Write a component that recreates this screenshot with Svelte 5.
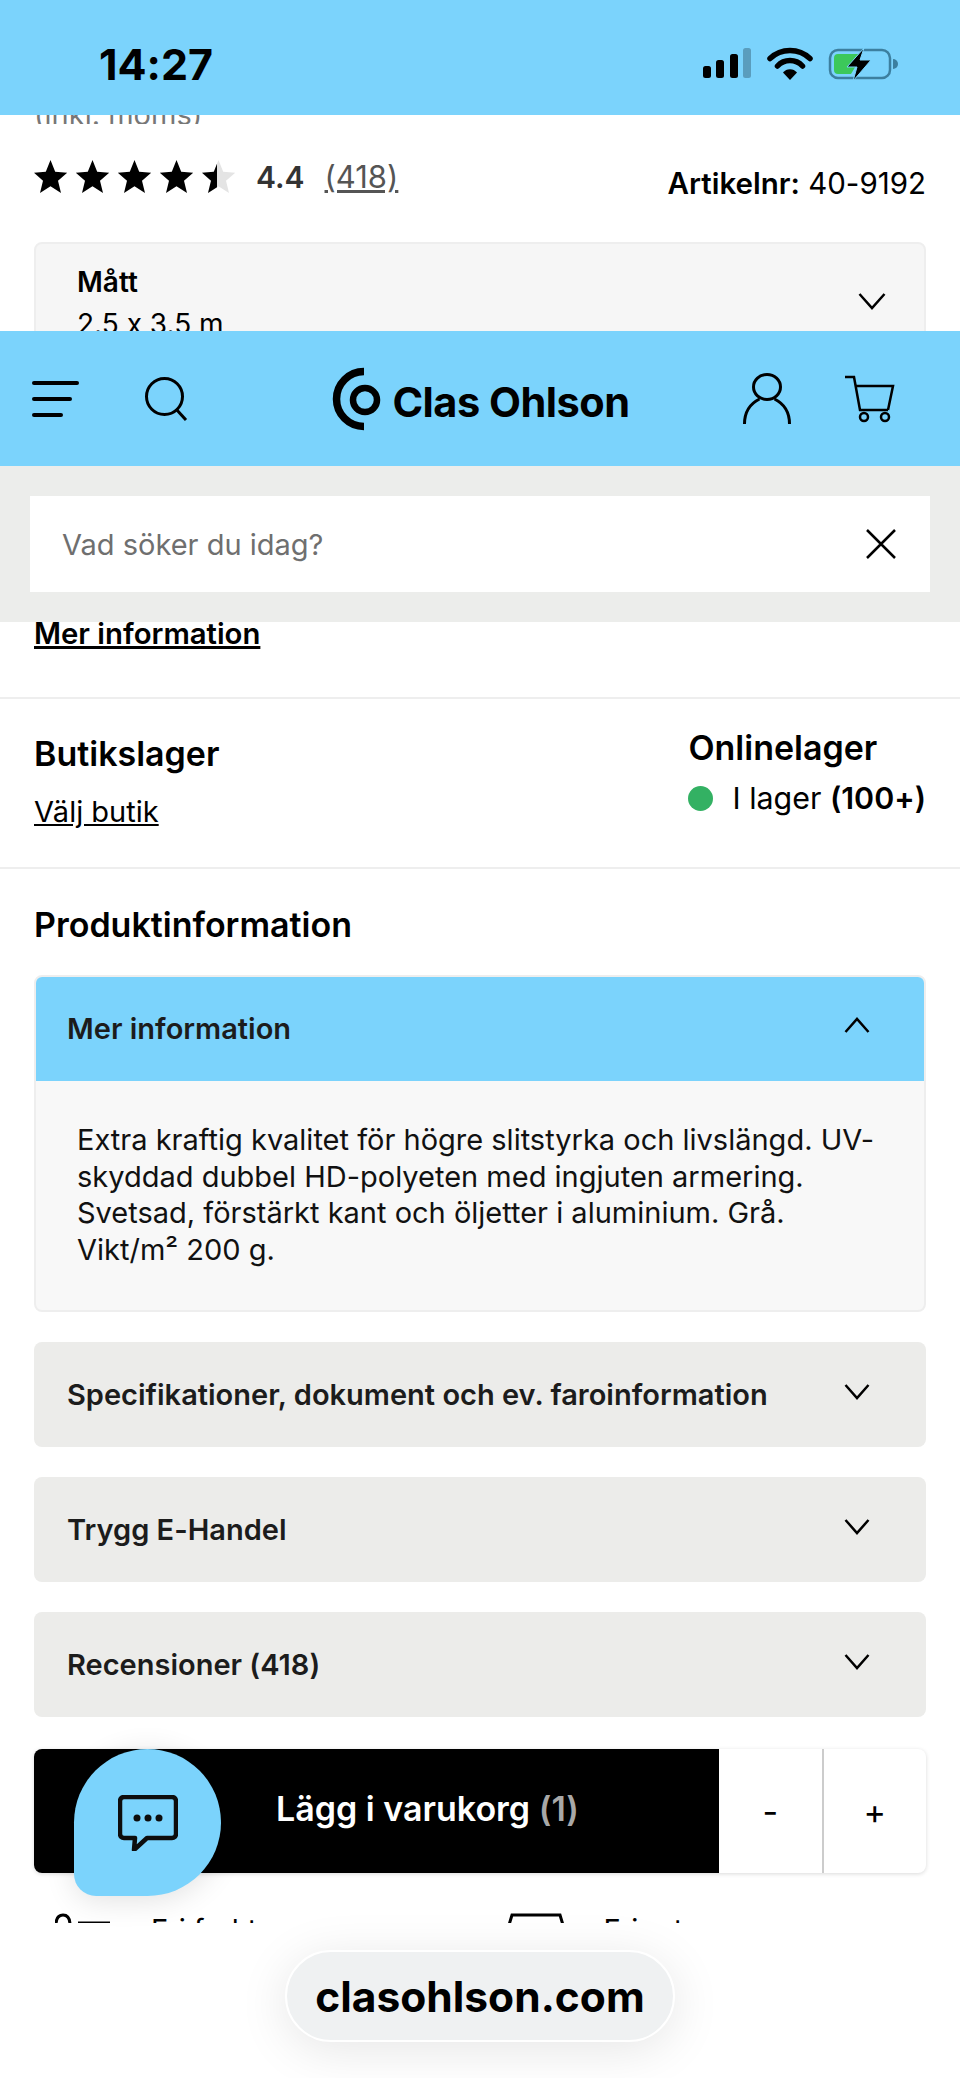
<script>
  const closed = ['Specifikationer, dokument och ev. faroinformation', 'Trygg E-Handel', 'Recensioner (418)']
</script>

<div class="page">
  <div class="status">
    <span class="time">14:27</span>
    <svg class="status-icons" width="200" height="40" viewBox="0 0 200 40">
      <rect x="2" y="19" width="8" height="12" rx="2.5" fill="#000" />
      <rect x="15" y="13" width="8" height="18" rx="2.5" fill="#000" />
      <rect x="29" y="7" width="8" height="24" rx="2.5" fill="#000" />
      <rect x="42" y="1" width="8" height="30" rx="2.5" fill="#5a9dbd" />
      <path d="M69 11.500a29 29 0 0 1 40 0" fill="none" stroke="#000" stroke-width="5.500" stroke-linecap="round" />
      <path d="M76.500 19a17 17 0 0 1 25 0" fill="none" stroke="#000" stroke-width="5.500" stroke-linecap="round" />
      <path d="M82 25.500a9 9 0 0 1 14 0L89 33z" fill="#000" />
      <rect x="129" y="3" width="60" height="28" rx="8" fill="none" stroke="#3c7f9f" stroke-width="2.500" />
      <path d="M133 11a4 4 0 0 1 4-4h21l-7 10h5l-6 10h-13a4 4 0 0 1-4-4z" fill="#3cc85a" />
      <path d="M163 1L146 20h10l-4 14 18-21h-11z" fill="#000" stroke="#7bd3fc" stroke-width="1" />
      <path d="M192 12a5 5 0 0 1 0 10z" fill="#3c7f9f" />
    </svg>
  </div>

  <section class="top">
    <div class="clipped-line">(inkl. moms)</div>
    <div class="rating-row">
      <div class="rating">
        <svg class="stars" width="202" height="34" viewBox="0 0 202 34">
          <defs>
            <path id="star" d="M16.500 0l4.700 11.800 12 .9-9.200 8 3 12.300-10.500-6.700-10.500 6.700 3-12.300-9.200-8 12-.9z" />
            <clipPath id="half"><rect x="0" y="0" width="15" height="34" /></clipPath>
          </defs>
          <use href="#star" x="0" />
          <use href="#star" x="42" />
          <use href="#star" x="84" />
          <use href="#star" x="126" />
          <use href="#star" x="168" fill="#e4e4e4" />
          <use href="#star" x="168" clip-path="url(#half)" />
        </svg>
        <b class="score">4.4</b>
        <span class="count">(418)</span>
      </div>
      <div class="artnr"><b>Artikelnr:</b> 40-9192</div>
    </div>
    <div class="variant">
      <div>
        <div class="variant-label">Mått</div>
        <div class="variant-value">2.5 x 3.5 m</div>
      </div>
      <svg width="28" height="18" viewBox="0 0 28 18"><path d="M1.500 2L14 16 26.500 2" fill="none" stroke="#000" stroke-width="2.500" /></svg>
    </div>
  </section>

  <header class="header">
    <div class="header-left">
      <div class="burger"><i></i><i></i><i></i></div>
      <svg width="44" height="44" viewBox="0 0 44 44" fill="none" stroke="#000" stroke-width="3">
        <circle cx="19.500" cy="19.500" r="18" />
        <path d="M31 32l10 11" />
      </svg>
    </div>
    <div class="logo">
      <svg width="50" height="64" viewBox="0 0 50 64" fill="none" stroke="#000">
        <path d="M32 4.500a27.500 27.500 0 0 0 0 55" stroke-width="7.500" />
        <circle cx="33" cy="33" r="12" stroke-width="6.500" />
      </svg>
      <span>Clas Ohlson</span>
    </div>
    <div class="header-right">
      <svg width="48" height="52" viewBox="0 0 48 52" fill="none" stroke="#000" stroke-width="3">
        <ellipse cx="24" cy="14" rx="13.500" ry="12.500" />
        <path d="M1.500 51c0-13 7-21 15-25M46.500 51c0-13-7-21-15-25" />
      </svg>
      <svg width="52" height="48" viewBox="0 0 52 48" fill="none" stroke="#000" stroke-width="2.500">
        <path d="M1 2h9l6 33h28" />
        <path d="M11 11h38l-5 24" />
        <circle cx="20" cy="42" r="4" />
        <circle cx="41" cy="42" r="4" />
      </svg>
    </div>
  </header>

  <div class="search-band">
    <div class="search-input">
      <span>Vad söker du idag?</span>
      <svg width="30" height="30" viewBox="0 0 30 30" fill="none" stroke="#000" stroke-width="2.500"><path d="M1 1l28 28M29 1L1 29" /></svg>
    </div>
  </div>

  <a class="more-link">Mer information</a>

  <section class="stock">
    <div class="stock-store">
      <h3>Butikslager</h3>
      <a>Välj butik</a>
    </div>
    <div class="stock-online">
      <h3>Onlinelager</h3>
      <div class="in-stock"><i class="dot"></i><span>I lager <b>(100+)</b></span></div>
    </div>
  </section>

  <section class="product">
    <h2>Produktinformation</h2>
    <div class="acc open">
      <div class="acc-head">
        <span>Mer information</span>
        <svg width="26" height="16" viewBox="0 0 26 16"><path d="M1.500 15L13 2l11.500 13" fill="none" stroke="#000" stroke-width="2.500" /></svg>
      </div>
      <p>Extra kraftig kvalitet för högre slitstyrka och livslängd. UV-<br />skyddad dubbel HD-polyeten med ingjuten armering.<br />Svetsad, förstärkt kant och öljetter i aluminium. Grå.<br />Vikt/m² 200 g.</p>
    </div>
    {#each closed as title}
      <div class="acc">
        <div class="acc-head">
          <span>{title}</span>
          <svg width="26" height="16" viewBox="0 0 26 16"><path d="M1.500 1L13 14 24.500 1" fill="none" stroke="#000" stroke-width="2.500" /></svg>
        </div>
      </div>
    {/each}
  </section>

  <div class="buy">
    <div class="buy-btn">Lägg i varukorg <span>(1)</span></div>
    <div class="qty">-</div>
    <div class="qty">+</div>
  </div>

  <div class="perks">
    <div class="perk">
      <svg width="56" height="12" viewBox="0 0 56 12" fill="none" stroke="#000" stroke-width="3">
        <path d="M1 12c0-8 3-10 7-10s7 2 7 10" />
        <path d="M23 10h32" />
      </svg>
      <span>Fri frakt</span>
    </div>
    <div class="perk">
      <svg width="56" height="12" viewBox="0 0 56 12" fill="none" stroke="#000" stroke-width="3">
        <path d="M1 12L4 2h48l3 10" />
      </svg>
      <span>Fri retur</span>
    </div>
  </div>

  <div class="url-area">
    <div class="url-pill">clasohlson.com</div>
  </div>

  <button class="chat" aria-label="Chatt">
    <svg width="60" height="56" viewBox="0 0 60 56">
      <path d="M6 2h48a4 4 0 0 1 4 4v33a4 4 0 0 1-4 4H29L16 55l1-12H6a4 4 0 0 1-4-4V6a4 4 0 0 1 4-4z" fill="none" stroke="#0d0d0d" stroke-width="4.500" stroke-linejoin="round" />
      <circle cx="19" cy="23" r="3.500" fill="#0d0d0d" />
      <circle cx="30" cy="23" r="3.500" fill="#0d0d0d" />
      <circle cx="41" cy="23" r="3.500" fill="#0d0d0d" />
    </svg>
  </button>
</div>

<style>
  :global(body) {
    margin: 0;
    background: #fff;
  }

  .page {
    position: relative;
    width: 960px;
    height: 2078px;
    overflow: hidden;
    background: #fff;
    color: #000;
    font-family: Inter, "Liberation Sans", sans-serif;
    font-feature-settings: "calt" 0;
  }

  .status {
    height: 115px;
    background: #7bd3fc;
    display: flex;
    justify-content: space-between;
    align-items: flex-start;
    padding: 0 59px 0 99px;
    box-sizing: border-box;
  }

  .time {
    margin-top: 39px;
    font-size: 43px;
    line-height: 50px;
    font-weight: 700;
  }

  .status-icons {
    margin-top: 47px;
  }

  .top {
    height: 216px;
    overflow: hidden;
    box-sizing: border-box;
    padding: 0 34px;
  }

  .clipped-line {
    height: 9px;
    overflow: hidden;
    font-size: 29px;
    line-height: 0;
    color: #777;
  }

  .rating-row {
    display: flex;
    justify-content: space-between;
    align-items: flex-end;
    margin-top: 34px;
  }

  .rating {
    display: flex;
    align-items: center;
    gap: 20px;
  }

  .score {
    font-size: 30px;
    font-weight: 600;
    color: #333;
  }

  .count {
    font-size: 31px;
    color: #555;
    text-decoration: underline;
  }

  .artnr {
    font-size: 29.500px;
    margin-bottom: -6px;
    white-space: nowrap;
  }

  .artnr b {
    font-weight: 600;
  }

  .variant {
    margin-top: 47px;
    height: 120px;
    box-sizing: border-box;
    border: 2px solid #eee;
    border-radius: 8px;
    background: #f6f6f6;
    padding: 20px 38px 0 41px;
    display: flex;
    justify-content: space-between;
  }

  .variant svg {
    margin-top: 28px;
  }

  .variant-label {
    font-size: 28px;
    line-height: 36px;
    font-weight: 600;
  }

  .variant-value {
    font-size: 28px;
    line-height: 36px;
    margin-top: 6px;
  }

  .header {
    height: 135px;
    background: #7bd3fc;
    display: flex;
    justify-content: space-between;
    align-items: center;
    padding: 0 64px 0 32px;
  }

  .header-left,
  .header-right {
    display: flex;
    align-items: center;
  }

  .header-left {
    gap: 66px;
  }

  .header-right {
    gap: 53px;
  }

  .burger {
    width: 47px;
    display: flex;
    flex-direction: column;
    gap: 12px;
  }

  .burger i {
    display: block;
    height: 4px;
    background: #000;
    border-radius: 2px;
  }

  .burger i:nth-child(2) {
    width: 40px;
  }

  .burger i:nth-child(3) {
    width: 31px;
  }

  .logo {
    display: flex;
    align-items: center;
    gap: 10px;
    margin-left: 30px;
  }

  .logo span {
    font-size: 41.500px;
    font-weight: 700;
    letter-spacing: -0.5px;
    margin-top: 6px;
  }

  .search-band {
    height: 156px;
    box-sizing: border-box;
    background: #ecedeb;
    padding: 30px;
  }

  .search-input {
    height: 96px;
    background: #fff;
    display: flex;
    justify-content: space-between;
    align-items: center;
    padding: 0 34px 0 32px;
    font-size: 29px;
    color: #6f6f6f;
  }

  .more-link {
    display: block;
    margin: -5px 34px 0;
    width: fit-content;
    font-size: 29.300px;
    line-height: 34px;
    font-weight: 600;
    text-decoration: underline;
    text-decoration-thickness: 2.500px;
  }

  .stock {
    margin-top: 46px;
    height: 172px;
    box-sizing: border-box;
    border-top: 2px solid #eee;
    border-bottom: 2px solid #eee;
    padding: 29px 34px 0;
    display: flex;
    justify-content: space-between;
  }

  h2,
  h3 {
    margin: 0;
    font-weight: 600;
  }

  h3 {
    font-size: 34px;
    line-height: 40px;
  }

  .stock-store h3 {
    margin-top: 6px;
  }

  .stock-store a {
    display: block;
    margin-top: 20px;
    font-size: 29px;
    text-decoration: underline;
  }

  .in-stock {
    display: flex;
    align-items: center;
    gap: 19px;
    margin-top: 12px;
    font-size: 30.400px;
  }

  .in-stock b {
    font-weight: 600;
  }

  .dot {
    width: 25px;
    height: 25px;
    border-radius: 50%;
    background: #33b163;
  }

  .product {
    padding: 36px 34px 0;
    display: flex;
    flex-direction: column;
    gap: 30px;
  }

  h2 {
    font-size: 34px;
    line-height: 40px;
    margin-bottom: 2px;
  }

  .acc {
    border-radius: 8px;
    background: #ececea;
    overflow: hidden;
  }

  .acc-head {
    height: 105px;
    box-sizing: border-box;
    padding: 0 56px 0 33px;
    display: flex;
    justify-content: space-between;
    align-items: center;
    font-size: 29px;
    font-weight: 600;
    color: #1c1c1c;
  }

  .acc-head svg {
    margin-top: -6px;
  }

  .acc.open {
    background: #f8f8f8;
    border: 2px solid #eee;
    margin: -2px 0 0;
  }

  .acc.open .acc-head {
    background: #7bd3fc;
    margin: -2px -2px 0;
    height: 106px;
  }

  .acc p {
    margin: 0;
    padding: 41px 20px 42px 41px;
    font-size: 29px;
    line-height: 36.500px;
    color: #111;
    white-space: nowrap;
  }

  .buy {
    margin: 32px 34px 0;
    height: 124px;
    display: flex;
    background: #fff;
    border-radius: 8px;
    overflow: hidden;
    box-shadow: 0 1px 4px rgba(0, 0, 0, 0.15);
  }

  .buy-btn {
    width: 685px;
    background: #000;
    color: #fff;
    box-sizing: border-box;
    padding: 0 0 5px 242px;
    display: flex;
    align-items: center;
    font-size: 34px;
    font-weight: 600;
    white-space: pre;
  }

  .buy-btn span {
    color: #a8a8a8;
  }

  .qty {
    flex: 1;
    display: flex;
    align-items: center;
    justify-content: center;
    font-size: 34px;
  }

  .qty + .qty {
    border-left: 2px solid #ccc;
  }

  .perks {
    margin-top: 40px;
    height: 10px;
    overflow: hidden;
    padding-left: 55px;
    display: flex;
  }

  .perk {
    width: 455px;
    display: flex;
    gap: 40px;
    font-size: 29px;
    line-height: 34px;
  }

  .url-area {
    height: 156px;
    display: flex;
    justify-content: center;
    padding-top: 27px;
    box-sizing: border-box;
  }

  .url-pill {
    width: 390px;
    height: 92px;
    box-sizing: border-box;
    border: 2px solid #fff;
    border-radius: 46px;
    background: #eff1f2;
    box-shadow: 0 8px 50px rgba(0, 0, 0, 0.1);
    display: flex;
    align-items: center;
    justify-content: center;
    font-size: 42.500px;
    font-weight: 700;
  }

  .chat {
    position: absolute;
    left: 74px;
    top: 1749px;
    width: 147px;
    height: 147px;
    border: 0;
    padding: 0;
    background: #7bd3fc;
    border-radius: 50% 50% 50% 22px;
    box-shadow: 0 4px 30px rgba(0, 0, 0, 0.12);
    display: flex;
    align-items: center;
    justify-content: center;
  }
</style>
